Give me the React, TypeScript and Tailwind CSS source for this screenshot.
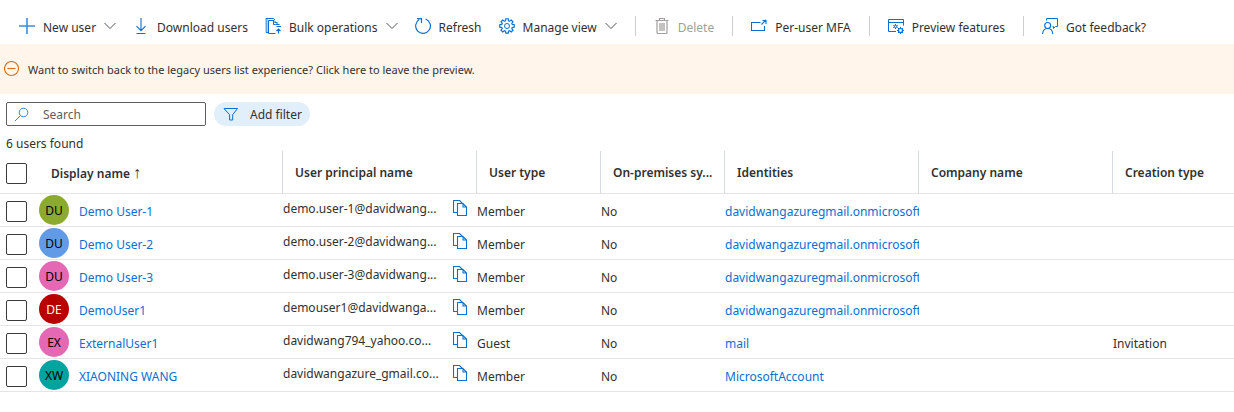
import type { ReactNode } from "react";

function Icon({ children, className = "text-[#0a6fd2]" }: { children: ReactNode; className?: string }) {
  return (
    <svg
      viewBox="0 0 16 16"
      className={`h-4 w-4 shrink-0 ${className}`}
      fill="none"
      stroke="currentColor"
      strokeWidth="1"
      aria-hidden="true"
    >
      {children}
    </svg>
  );
}

const gearPath =
  "M6.9.8h2.2l.3 1.8 1 .4 1.5-1.1 1.6 1.6-1.1 1.5.4 1 1.8.3v2.2l-1.8.3-.4 1 1.1 1.5-1.6 1.6-1.5-1.1-1 .4-.3 1.8H6.9l-.3-1.8-1-.4-1.5 1.1-1.6-1.6 1.1-1.5-.4-1L1.4 8.5V6.3L3.2 6l.4-1-1.1-1.5 1.6-1.6L5.6 3l1-.4z";

const icons = {
  plus: (
    <Icon className="text-[#3a8ddc]">
      <path d="M8 0v16M0 8h16" strokeWidth="1.6" />
    </Icon>
  ),
  download: (
    <Icon>
      <path d="M8 0v12.5M3.5 8.2L8 12.7l4.5-4.5M3.5 15.5h9" strokeWidth="1.1" />
    </Icon>
  ),
  bulk: (
    <Icon>
      <path d="M1.5 0v14.5" stroke="#5ea3e2" strokeWidth="2" />
      <path d="M1 .5h7.500l1.500 1.500M1 14.500h3" />
      <path d="M10.500 15.500H3.500V2.500h5.500l3.500 3.500M8.500 2.500v4h2" />
      <path d="M9.500 4.500h3M10.500 6.500h4M11.500 8.500h4.500" />
      <path d="M13.500 15.500v-4M11.500 13l2-2 2 2" strokeWidth="1.2" />
    </Icon>
  ),
  refresh: (
    <Icon>
      <path d="M10.600 1a7.400 7.400 0 1 1-6.400.6" strokeWidth="1.2" />
      <path d="M2 .6h4.500v4.400" strokeWidth="1.2" />
    </Icon>
  ),
  gear: (
    <Icon>
      <path d={gearPath} transform="translate(-.7 -.1) scale(1.09)" strokeWidth="1.1" />
      <circle cx="8" cy="8" r="2.5" />
    </Icon>
  ),
  trash: (
    <Icon className="text-[#a19f9d]">
      <path d="M1.500 2.500h13M5.500 2.500v-2h5v2M3 2.500v12q0 1 1 1h8q1 0 1-1v-12" strokeWidth="1.2" />
      <rect x="5" y="5" width="6" height="8" fill="#c4c2c0" stroke="none" />
    </Icon>
  ),
  external: (
    <Icon>
      <path d="M9.500 4.500H.5v8h13V8M10.500 6.500l4.500-4.500M11.500 2.500h3.500V6" strokeWidth="1.1" />
    </Icon>
  ),
  preview: (
    <Icon>
      <path d="M8 13.500H.5V1.500h15v6M.5 4.500h15" />
      <circle cx="7.500" cy="8.500" r="1.200" />
      <path d="M7.500 6v1.300M7.500 9.700V11M5.200 7.200l1.200.7M8.600 9.100l1.200.7M5.200 9.800l1.200-.7M8.600 7.900l1.200-.7" />
      <circle cx="12.500" cy="12.500" r="2" strokeWidth="1.2" />
      <path d="M12.500 9v1.400M12.500 14.600V16M9 12.500h1.400M14.600 12.500H16M10 10l1 1M14 14l1 1M15 10l-1 1M11 14l-1 1" />
    </Icon>
  ),
  feedback: (
    <Icon>
      <path d="M4.500 2.500V.5h11v8h-2L11.500 10.500v-2H10.500" />
      <circle cx="5.700" cy="7.500" r="3" strokeWidth="1.1" />
      <path d="M.6 16c.2-3.600 2.200-5.500 5.100-5.500s4.900 1.900 5.100 5.500" strokeWidth="1.1" />
    </Icon>
  ),
};

function Chevron() {
  return (
    <svg viewBox="0 0 12 8" className="h-2 w-3 shrink-0" fill="none" stroke="#55534f" aria-hidden="true">
      <path d="M.5 1L6 6.500 11.500 1" />
    </svg>
  );
}

function ToolButton({
  icon,
  label,
  menu = false,
  disabled = false,
}: {
  icon: ReactNode;
  label: string;
  menu?: boolean;
  disabled?: boolean;
}) {
  return (
    <button
      type="button"
      disabled={disabled}
      className="flex h-6 shrink-0 items-center gap-2 whitespace-nowrap text-[#323130] disabled:text-[#a19f9d]"
    >
      {icon}
      <span className="pt-1">{label}</span>
      {menu && <Chevron />}
    </button>
  );
}

function Separator() {
  return <div className="mx-px h-5 w-px shrink-0 bg-[#cfcdcb]" />;
}

function Checkbox({ label }: { label: string }) {
  return (
    <input
      type="checkbox"
      aria-label={label}
      className="mt-0.5 ml-1.5 block h-[21px] w-[21px] appearance-none rounded-xs border border-[#3b3a39] bg-white checked:bg-[#0a6fd2]"
    />
  );
}

function CopyIcon() {
  return (
    <Icon>
      <path d="M4.500 12.500H.5V.5h6l3 3" strokeWidth="1.1" />
      <path d="M4.500 3.500h5.500l3.500 3.500v8.500h-9zM10 3.500V7h3.500" strokeWidth="1.1" />
    </Icon>
  );
}

const columns = [
  "User principal name",
  "User type",
  "On-premises sy...",
  "Identities",
  "Company name",
  "Creation type",
];

const orgIdentity = "davidwangazuregmail.onmicrosoft.com";

const users = [
  { name: "Demo User-1", initials: "DU", avatar: "bg-[#8cab2e] text-black", upn: "demo.user-1@davidwang...", type: "Member", identity: orgIdentity, creation: "" },
  { name: "Demo User-2", initials: "DU", avatar: "bg-[#629be5] text-black", upn: "demo.user-2@davidwang...", type: "Member", identity: orgIdentity, creation: "" },
  { name: "Demo User-3", initials: "DU", avatar: "bg-[#e468b4] text-black", upn: "demo.user-3@davidwang...", type: "Member", identity: orgIdentity, creation: "" },
  { name: "DemoUser1", initials: "DE", avatar: "bg-[#b90000] text-white", upn: "demouser1@davidwanga...", type: "Member", identity: orgIdentity, creation: "" },
  { name: "ExternalUser1", initials: "EX", avatar: "bg-[#e468b4] text-black", upn: "davidwang794_yahoo.co...", type: "Guest", identity: "mail", creation: "Invitation" },
  { name: "XIAONING WANG", initials: "XW", avatar: "bg-[#00a3a0] text-black", upn: "davidwangazure_gmail.co...", type: "Member", identity: "MicrosoftAccount", creation: "" },
];

const cell = "h-[33px] overflow-hidden whitespace-nowrap border-b border-[#e5e5e5] p-0";
const textCell = "h-[33px] overflow-hidden whitespace-nowrap border-b border-[#e5e5e5] p-0 pt-1";

export default function App() {
  return (
    <main className="overflow-x-hidden bg-white font-['Noto_Sans','Open_Sans',sans-serif] text-[12px] leading-4 text-[#323130]">
      <div className="flex h-11 items-center gap-[17px] pt-2 pl-[19px]" role="toolbar" aria-label="User actions">
        <ToolButton icon={icons.plus} label="New user" menu />
        <ToolButton icon={icons.download} label="Download users" />
        <ToolButton icon={icons.bulk} label="Bulk operations" menu />
        <ToolButton icon={icons.refresh} label="Refresh" />
        <ToolButton icon={icons.gear} label="Manage view" menu />
        <Separator />
        <ToolButton icon={icons.trash} label="Delete" disabled />
        <Separator />
        <ToolButton icon={icons.external} label="Per-user MFA" />
        <Separator />
        <ToolButton icon={icons.preview} label="Preview features" />
        <Separator />
        <ToolButton icon={icons.feedback} label="Got feedback?" />
      </div>

      <a href="#legacy" className="flex h-[50px] items-center gap-2 bg-[#fff5eb] pl-1 text-[11px]">
        <Icon className="text-[#db6b0c]">
          <circle cx="7.500" cy="7.500" r="7" strokeWidth="1.1" />
          <path d="M3.500 7.500h8" strokeWidth="1.1" />
        </Icon>
        <span className="pt-0.5">
          Want to switch back to the legacy users list experience? Click here to leave the preview.
        </span>
      </a>

      <div className="flex gap-2 px-1.5 pt-2">
        <label className="flex h-6 w-[200px] items-center gap-3 rounded-xs border border-[#605e5c] pl-2">
          <Icon className="text-[#2f83d6]">
            <circle cx="8.500" cy="6.500" r="4.300" />
            <path d="M5.400 9.600L0 15" />
          </Icon>
          <input
            type="search"
            aria-label="Search"
            placeholder="Search"
            className="w-full min-w-0 bg-transparent pt-0.5 outline-none placeholder:text-[#605e5c]"
          />
        </label>
        <button type="button" className="flex h-6 items-center gap-3 rounded-full bg-[#e1effa] px-2">
          <Icon>
            <path d="M2 2.500h13.500L10.700 8.700v5.300H7.600V8.700z" />
          </Icon>
          <span className="pt-0.5">Add filter</span>
        </button>
      </div>

      <p className="h-[25px] px-1.5 pt-2.5">6 users found</p>

      <table className="w-full min-w-[1234px] table-fixed border-separate border-spacing-0 text-left">
        <colgroup>
          <col className="w-[39px]" />
          <col className="w-[244px]" />
          <col className="w-[194px]" />
          <col className="w-[124px]" />
          <col className="w-[124px]" />
          <col className="w-[194px]" />
          <col className="w-[194px]" />
          <col />
        </colgroup>
        <thead>
          <tr>
            <th className="h-[43px] border-b border-[#e5e5e5] p-0">
              <Checkbox label="Select all users" />
            </th>
            <th className="border-r border-b border-r-[#d5d9e2] border-b-[#e5e5e5] p-0 pt-0.5 pl-3 font-semibold">
              Display name <span className="text-base leading-4 font-normal">↑</span>
            </th>
            {columns.map((name) => (
              <th
                key={name}
                className="overflow-hidden border-r border-b border-r-[#d5d9e2] border-b-[#e5e5e5] p-0 pt-0.5 pl-3 font-semibold whitespace-nowrap last:border-r-0"
              >
                {name}
              </th>
            ))}
          </tr>
        </thead>
        <tbody>
          {users.map((user) => (
            <tr key={user.name}>
              <td className={cell}>
                <Checkbox label={`Select ${user.name}`} />
              </td>
              <td className={cell}>
                <div className="flex items-center gap-2.5">
                  <span
                    className={`flex h-[30px] w-[30px] items-center justify-center rounded-full pt-0.5 ${user.avatar}`}
                  >
                    {user.initials}
                  </span>
                  <a href="#user" className="pt-1 text-[#0a6fd2]">
                    {user.name}
                  </a>
                </div>
              </td>
              <td className={cell}>
                <div className="flex items-start justify-between pr-2 pb-1">
                  <span className="pt-px">{user.upn}</span>
                  <button type="button" aria-label={`Copy ${user.name} principal name`}>
                    <CopyIcon />
                  </button>
                </div>
              </td>
              <td className={textCell}>{user.type}</td>
              <td className={textCell}>No</td>
              <td className={textCell}>
                <a href="#identity" className="text-[#0a6fd2]">
                  {user.identity}
                </a>
              </td>
              <td className={textCell} />
              <td className={textCell}>{user.creation}</td>
            </tr>
          ))}
        </tbody>
      </table>
    </main>
  );
}
